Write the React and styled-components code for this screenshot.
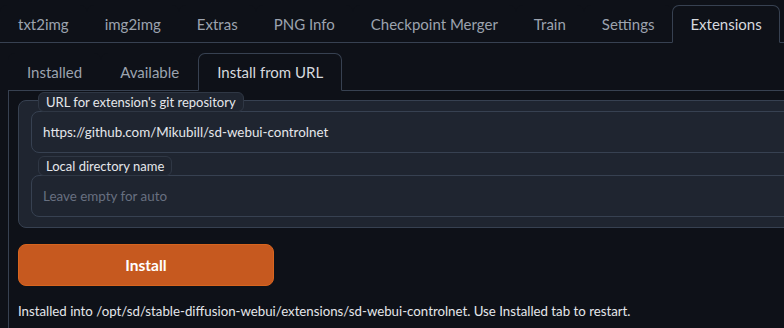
import React from "react";
import styled, { createGlobalStyle } from "styled-components";

const GlobalStyle = createGlobalStyle`
  html, body {
    margin: 0;
    padding: 0;
    background: #0e1118;
    overflow: hidden;
  }
  body {
    font-family: Lato, "Noto Sans", sans-serif;
    color: #e5e7eb;
  }
`;

const Page = styled.div`
  width: 784px;
  height: 328px;
  overflow: hidden;
  background: #0e1118;
`;

const TopTabs = styled.div`
  display: flex;
  padding-top: 5px;
  border-bottom: 1px solid #374151;
  height: 37px;
`;

const Tab = styled.div`
  box-sizing: border-box;
  height: ${(p) => (p.$active ? "38px" : "37px")};
  padding: 0 ${(p) => p.$pad || 17}px;
  display: flex;
  align-items: center;
  font-size: 15px;
  color: ${(p) => (p.$active ? "#d6d9de" : "#9ca3af")};
  border: 1px solid ${(p) => (p.$active ? "#374151" : "transparent")};
  border-bottom: 1px solid ${(p) => (p.$active ? "#0e1118" : "transparent")};
  border-radius: 7px 7px 0 0;
  background: #0e1118;
  position: relative;
  z-index: 1;
  white-space: nowrap;
  flex-shrink: 0;
`;

const Content = styled.div`
  margin-left: 8px;
`;

const SubTabs = styled.div`
  display: flex;
  padding-top: 10px;
  border-bottom: 1px solid #374151;
  height: 37px;
`;

const Panel = styled.div`
  box-sizing: border-box;
  border-left: 1px solid #374151;
  padding: 9px 0 0 9px;
  height: 237px;
  overflow: hidden;
`;

const Block = styled.div`
  display: flex;
  flex-direction: column;
  background: #1f2530;
  border: 1px solid #374151;
  border-radius: 8px;
  padding: 0 0 10px 12px;
  width: 820px;
`;

const Field = styled.div`
  display: flex;
  flex-direction: column;
  margin-top: ${(p) => p.$offset || 0}px;
`;

const Label = styled.span`
  align-self: flex-start;
  margin-left: 7px;
  margin-bottom: -1px;
  position: relative;
  z-index: 1;
  box-sizing: border-box;
  height: 20px;
  display: flex;
  align-items: center;
  padding: 0 7px;
  background: #1f2530;
  border: 1px solid #2f3744;
  border-radius: 6px;
  font-size: 13px;
  color: #e5e7eb;
`;

const Input = styled.div`
  box-sizing: border-box;
  height: 42px;
  border: 1px solid #374151;
  border-radius: 8px;
  background: #1f2530;
  display: flex;
  align-items: center;
  padding: 0 11px;
  font-size: 13.4px;
  color: ${(p) => (p.$placeholder ? "#687080" : "#e5e7eb")};
`;

const Button = styled.button`
  margin-top: 16px;
  width: 256px;
  height: 42px;
  box-sizing: border-box;
  background: #c6591f;
  border: 1px solid #d8651f;
  border-radius: 8px;
  color: #ffffff;
  font-family: Lato, "Noto Sans", sans-serif;
  font-weight: 700;
  font-size: 15.5px;
  display: flex;
  align-items: center;
  justify-content: center;
`;

const Status = styled.div`
  margin-top: 17px;
  font-size: 13.25px;
  color: #e5e7eb;
  white-space: nowrap;
`;

const topTabs = ["txt2img", "img2img", "Extras", "PNG Info", "Checkpoint Merger", "Train", "Settings", "Extensions"];
const subTabs = ["Installed", "Available", "Install from URL"];

export default function App() {
  return (
    <Page>
      <GlobalStyle />
      <TopTabs>
        {topTabs.map((t) => (
          <Tab key={t} $active={t === "Extensions"}>
            {t}
          </Tab>
        ))}
      </TopTabs>
      <Content>
        <SubTabs>
          {subTabs.map((t) => (
            <Tab key={t} $active={t === "Install from URL"} $pad={18}>
              {t}
            </Tab>
          ))}
        </SubTabs>
        <Panel>
          <Block>
            <Field $offset={-9}>
              <Label>URL for extension's git repository</Label>
              <Input>https://github.com/Mikubill/sd-webui-controlnet</Input>
            </Field>
            <Field $offset={3}>
              <Label>Local directory name</Label>
              <Input $placeholder>Leave empty for auto</Input>
            </Field>
          </Block>
          <Button>Install</Button>
          <Status>
            Installed into /opt/sd/stable-diffusion-webui/extensions/sd-webui-controlnet. Use Installed tab to restart.
          </Status>
        </Panel>
      </Content>
    </Page>
  );
}
